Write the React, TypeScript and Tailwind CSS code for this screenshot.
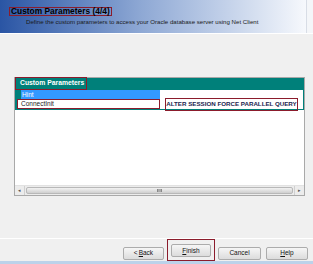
import React from 'react';

const red = 'border-[1.5px] border-[#8b1c2c]';

function Btn({ children, className = '' }: { children: React.ReactNode; className?: string }) {
  return (
    <div
      className={`h-[13px] flex items-center justify-center border border-[#acacac] bg-gradient-to-b from-[#f6f6f6] to-[#dcdcdc] rounded-[2px] text-[6.5px] text-[#111] ${className}`}
    >
      {children}
    </div>
  );
}

export default function App() {
  return (
    <div className="w-[313px] h-[264px] bg-[#f0f0f0] flex flex-col overflow-hidden font-['Liberation_Sans',sans-serif]">
      {/* wizard header */}
      <div className="h-[34px] shrink-0 bg-gradient-to-r from-[#2a55a4] via-[#8ea8d4] via-45% to-[#fbfcfe] border-b border-white flex">
        <div className="flex-1 pl-[9px] pt-[7px] leading-[7px]">
          <div className={`w-fit ${red} px-[1px] leading-[7px] text-[8.4px] font-bold text-black`}>
            Custom Parameters (4/4)
          </div>
          <div className="pl-[17px] mt-[2px] text-[6.1px] leading-[7px] text-[#1a1a1a]">
            Define the custom parameters to access your Oracle database server using Net Client
          </div>
        </div>
        <div className="w-[7px] border-l border-[#d8dde6] bg-[#f4f6f9]" />
      </div>

      {/* grid panel */}
      <div className="pl-[14px] pt-[43px]">
        <div className="w-[291px] h-[119px] border border-[#a9a9a9] bg-white flex flex-col">
          <div className="h-[12px] bg-[#00807a] flex items-center">
            <div className={`w-[72px] h-[13px] -mt-[1px] ${red} flex items-center pl-[4px] text-[6.8px] font-bold text-white`}>
              Custom Parameters
            </div>
          </div>
          <div className="h-[9px] flex border-r border-[#00807a]">
            <div className="w-[6px] bg-[#00807a]" />
            <div className="w-[139px] bg-[#3399ff] text-white text-[6.5px] leading-[9px] pl-[1px]">Hint</div>
            <div className="flex-1" />
          </div>
          <div className="h-[11px] flex border-r border-b border-[#00807a]">
            <div className="w-[2px] bg-[#00807a]" />
            <div className={`w-[143px] ${red} text-[6.5px] leading-[8px] pl-[3px] text-[#222]`}>ConnectInit</div>
            <div className="flex-1 flex items-center pl-[5px]">
              <div className={`w-[133px] h-[13px] ${red} flex items-center justify-center text-[6.2px] font-bold text-[#1c2550] whitespace-nowrap`}>
                ALTER SESSION FORCE PARALLEL QUERY
              </div>
            </div>
          </div>
          <div className="flex-1" />
          {/* horizontal scrollbar */}
          <div className="h-[10px] flex bg-[#ececec] border-t border-[#e2e2e2]">
            <div className="w-[10px] flex items-center justify-center text-[5px] text-[#555] border-r border-[#d0d0d0]">◂</div>
            <div className="flex-1 mx-[1px] my-[1px] rounded-[2px] border border-[#b8b8b8] bg-gradient-to-b from-[#f2f2f2] to-[#cfcfcf] flex items-center justify-center">
              <div className="w-[5px] h-[3px] border-x border-[#888] bg-[#aaa]" />
            </div>
            <div className="w-[10px] flex items-center justify-center text-[5px] text-[#555] border-l border-[#d0d0d0]">▸</div>
          </div>
        </div>
      </div>

      {/* footer */}
      <div className="mt-[42px] h-[1px] bg-[#c8c8c8] border-b border-white" />
      <div className="flex items-start pl-[123px]">
        <div className="flex gap-[3px] items-center">
          <Btn className="w-[41px] mt-[6px]">
            &lt; <span className="underline ml-[1px]">B</span>ack
          </Btn>
          <div className={`${red} p-[3px] pt-[4px]`}>
            <Btn className="w-[40px]">
              <span className="underline">F</span>inish
            </Btn>
          </div>
          <Btn className="w-[43px] mt-[6px]">Cancel</Btn>
          <Btn className="w-[42px] mt-[6px] ml-[2px]">
            <span className="underline">H</span>elp
          </Btn>
        </div>
      </div>
      <div className="flex-1" />
      <div className="h-[3px] bg-[#bcd2ea]" />
    </div>
  );
}
